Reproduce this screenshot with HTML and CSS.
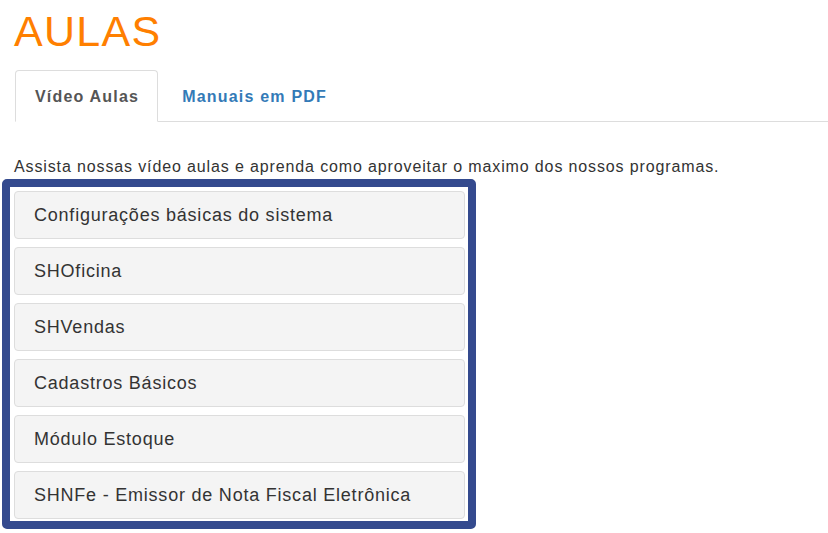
FILE: index.html
```html
<!DOCTYPE html>
<html lang="pt">
<head>
<meta charset="utf-8">
<link rel="stylesheet" href="styles.css">
</head>
<body>
<div class="page">
  <h1 class="title">AULAS</h1>
  <ul class="tabs">
    <li class="tab active">Vídeo Aulas</li>
    <li class="tab">Manuais em PDF</li>
  </ul>
  <p class="intro">Assista nossas vídeo aulas e aprenda como aproveitar o maximo dos nossos programas.</p>
  <div class="highlight">
    <div class="panel">Configurações básicas do sistema</div>
    <div class="panel">SHOficina</div>
    <div class="panel">SHVendas</div>
    <div class="panel">Cadastros Básicos</div>
    <div class="panel">Módulo Estoque</div>
    <div class="panel">SHNFe - Emissor de Nota Fiscal Eletrônica</div>
  </div>
</div>
</body>
</html>
```
FILE: styles.css
```css
* { box-sizing: border-box; }
html, body { margin: 0; padding: 0; background: #fff; }
body {
  font-family: "Liberation Sans", Arial, sans-serif;
  color: #333;
}
.page {
  padding: 0 0 0 14px;
}
.title {
  margin: 0;
  padding-top: 5px;
  font-size: 43px;
  line-height: 52px;
  letter-spacing: 1.3px;
  font-weight: normal;
  color: #ff7f00;
}
.tabs {
  list-style: none;
  margin: 13px 0 0 1px;
  padding: 0;
  display: flex;
  border-bottom: 1px solid #ddd;
}
.tab {
  padding: 0 19px;
  height: 51px;
  line-height: 52px;
  font-size: 16px;
  letter-spacing: 1.2px;
  font-weight: bold;
  color: #337ab7;
  border: 1px solid transparent;
  border-radius: 4px 4px 0 0;
  margin-bottom: -1px;
  margin-right: 4px;
}
.tab.active {
  color: #555;
  background: #fff;
  border-color: #ddd;
  border-bottom-color: #fff;
  height: 52px;
  padding-right: 18px;
}
.intro {
  margin: 35px 0 0 0;
  font-size: 16px;
  line-height: 20px;
  letter-spacing: 0.87px;
}
.highlight {
  margin: 2px 0 0 -12px;
  width: 474px;
  border: 8px solid #344a8e;
  border-radius: 5px;
  padding: 4px 3px 2px 4px;
  display: flex;
  flex-direction: column;
  gap: 8px;
}
.panel {
  height: 48px;
  background: #f4f4f4;
  border: 1px solid #ddd;
  border-radius: 4px;
  padding: 0 19px;
  line-height: 46px;
  font-size: 18px;
  letter-spacing: 0.78px;
  color: #333;
}
```
